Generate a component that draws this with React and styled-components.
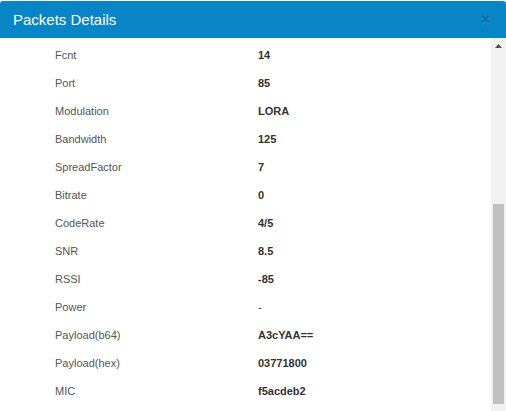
import React from "react";
import styled, { createGlobalStyle } from "styled-components";

const Global = createGlobalStyle`
  html, body { margin: 0; padding: 0; background: #fff; }
  body { font-family: "Liberation Sans", Arial, sans-serif; }
  #root { width: 506px; height: 411px; overflow: hidden; }
`;

const Modal = styled.div`
  width: 506px;
  height: 411px;
  display: flex;
  flex-direction: column;
  background: #fff;
`;

const Header = styled.div`
  margin-top: 1px;
  height: 37px;
  flex: none;
  background: #0785c6;
  border-radius: 3px 3px 0 0;
  display: flex;
  align-items: center;
  justify-content: space-between;
  padding: 0 16px 0 13px;
`;

const Title = styled.h4`
  margin: 0;
  color: #fff;
  font-size: 15px;
  font-weight: normal;
  line-height: 1;
`;

const Close = styled.span`
  color: #000;
  opacity: 0.2;
  text-shadow: 0 1px 0 #fff;
  font-size: 16px;
  font-weight: bold;
  line-height: 1;
`;

const Body = styled.div`
  flex: 1;
  display: flex;
  min-height: 0;
`;

const Content = styled.div`
  flex: 1;
  padding: 3px 0 0 55px;
`;

const Row = styled.div`
  display: grid;
  grid-template-columns: 203px 1fr;
  height: 28px;
  align-items: center;
  font-size: 11px;
`;

const Label = styled.span`
  color: #555;
`;

const Value = styled.span`
  color: #333;
  font-weight: bold;
`;

const Scrollbar = styled.div`
  width: 15px;
  flex: none;
  background: #f1f1f1;
  display: flex;
  flex-direction: column;
`;

const ArrowButton = styled.div`
  height: 15px;
  display: flex;
  align-items: center;
  justify-content: center;
`;

const Track = styled.div`
  flex: 1;
  display: flex;
  flex-direction: column;
  padding: 0 2px 0 2px;
`;

const Thumb = styled.div`
  margin-top: ${(p) => p.$offset}px;
  height: ${(p) => p.$size}px;
  background: #c1c1c1;
`;

const rows = [
  ["Fcnt", "14"],
  ["Port", "85"],
  ["Modulation", "LORA"],
  ["Bandwidth", "125"],
  ["SpreadFactor", "7"],
  ["Bitrate", "0"],
  ["CodeRate", "4/5"],
  ["SNR", "8.5"],
  ["RSSI", "-85"],
  ["Power", "-"],
  ["Payload(b64)", "A3cYAA=="],
  ["Payload(hex)", "03771800"],
  ["MIC", "f5acdeb2"],
];

export default function App() {
  return (
    <>
      <Global />
      <Modal>
        <Header>
          <Title>Packets Details</Title>
          <Close>×</Close>
        </Header>
        <Body>
          <Content>
            {rows.map(([k, v]) => (
              <Row key={k}>
                <Label>{k}</Label>
                <Value style={v === "-" ? { fontWeight: "normal" } : undefined}>{v}</Value>
              </Row>
            ))}
          </Content>
          <Scrollbar>
            <ArrowButton>
              <svg width="7" height="4" viewBox="0 0 7 4">
                <polygon points="0,4 3.5,0 7,4" fill="#505050" />
              </svg>
            </ArrowButton>
            <Track>
              <Thumb $offset={151} $size={200} />
            </Track>
          </Scrollbar>
        </Body>
      </Modal>
    </>
  );
}
